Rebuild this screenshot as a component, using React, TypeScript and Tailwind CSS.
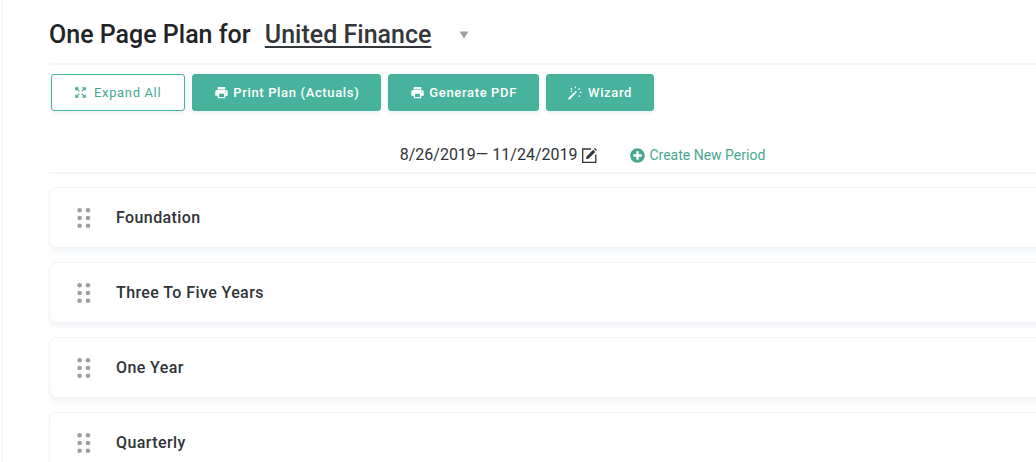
import type { ReactNode } from 'react';
import { FaPlusCircle } from 'react-icons/fa';
import { MdPrint } from 'react-icons/md';
import { clsx } from 'clsx';

const SECTIONS = ['Foundation', 'Three To Five Years', 'One Year', 'Quarterly'];

const ExpandIcon = () => (
  <svg width="11" height="11" viewBox="0 0 11 11" fill="none" stroke="currentColor" strokeWidth="1.2" aria-hidden="true">
    <path d="M.8 3.6V.8h2.8M.8.8l3.4 3.4M7.4.8h2.8v2.8M10.2.8 6.8 4.2M.8 7.4v2.8h2.8M.8 10.2l3.4-3.4M7.4 10.2h2.8V7.4M10.2 10.2 6.8 6.8" />
  </svg>
);

const WandIcon = () => (
  <svg width="14" height="14" viewBox="0 0 14 14" fill="none" stroke="currentColor" strokeLinecap="round" aria-hidden="true">
    <path d="M1.2 12.6 6 7.8" strokeWidth="2" />
    <path d="m7.2 6.6.8-.8" strokeWidth="1.6" />
    <path d="M3.2 2.6l.7.7M7.4.9v.8M11.4 2.6l-.7.7M12.4 6.4h.6M10.9 9.8l.6.6M3.2 5.6l.4-.3" strokeWidth="1.2" />
  </svg>
);

const EditIcon = () => (
  <svg width="17" height="17" viewBox="0 0 17 17" fill="none" stroke="currentColor" aria-hidden="true">
    <path d="M10 2H1.7v13.3h13.1V7.6" strokeWidth="1.3" />
    <path d="M4.9 12.2l.7-2.8 6.6-6.6 2.1 2.1-6.6 6.6z" fill="currentColor" stroke="none" />
    <path d="M13 1.9l.9-.9 2.1 2.1-.9.9z" fill="currentColor" stroke="none" />
  </svg>
);

const DragHandle = () => (
  <svg width="14" height="20" viewBox="0 0 14 20" fill="currentColor" aria-hidden="true">
    {[2.3, 10, 17.7].map((y) => (
      <g key={y}>
        <circle cx="2.6" cy={y} r="2.3" />
        <circle cx="11" cy={y} r="2.3" />
      </g>
    ))}
  </svg>
);

const ToolbarButton = ({
  icon,
  outline = false,
  children,
}: {
  icon: ReactNode;
  outline?: boolean;
  children: ReactNode;
}) => (
  <button
    type="button"
    className={clsx(
      'flex h-[37px] items-center gap-1 rounded-[3px] border border-[#47b39c] text-[13px] tracking-wider shadow-[0_2px_4px_#eaf2f6]',
      outline ? 'bg-white px-[23px] text-[#47a892]' : 'bg-[#47b39c] px-[21px] font-medium text-white'
    )}
  >
    {icon}
    {children}
  </button>
);

const SectionCard = ({ title }: { title: string }) => (
  <li className="flex h-[61px] items-center gap-[25px] rounded-lg border border-[#f1f3f5] bg-white pl-[27px] shadow-[0_4px_5px_#f3f6f9]">
    <button type="button" aria-label={`Move ${title}`} className="cursor-grab text-[#9b9fa2]">
      <DragHandle />
    </button>
    <h2 className="text-base font-medium tracking-wide text-[#303337]">{title}</h2>
  </li>
);

const App = () => {
  return (
    <div className="h-screen overflow-hidden bg-white pl-0.5 font-['Roboto',sans-serif]">
      {/* The plan runs on past the right edge of the window */}
      <main className="-mr-20 min-h-full border-l border-[#f0f1f3] pl-[46px]">
        <header className="flex h-[65px] items-center border-b-2 border-[#f5f6f7] pt-1.5">
          <h1 className="text-[25px] font-medium text-[#212327]">
            One Page Plan for{' '}
            <a href="#plan" className="ml-2 text-[#33363a] underline decoration-2 underline-offset-3">
              United Finance
            </a>
          </h1>
          <button type="button" aria-label="Switch plan" className="ml-[28px] text-[#9aa3a6]">
            <svg width="10" height="8" viewBox="0 0 10 8" fill="currentColor" aria-hidden="true">
              <path d="M.5.5h9L5 7.5z" />
            </svg>
          </button>
        </header>

        <div className="flex gap-[7px] px-0.5 pt-[9px]">
          <ToolbarButton outline icon={<span className="mr-1"><ExpandIcon /></span>}>
            Expand All
          </ToolbarButton>
          <ToolbarButton icon={<MdPrint size={15} />}>Print Plan (Actuals)</ToolbarButton>
          <ToolbarButton icon={<MdPrint size={15} />}>Generate PDF</ToolbarButton>
          <ToolbarButton icon={<span className="mr-0.5"><WandIcon /></span>}>Wizard</ToolbarButton>
        </div>

        <div className="mt-[25px] flex h-[38px] items-center justify-center gap-8 border-b-2 border-[#f5f6f7] pt-0.5">
          <div className="flex items-center gap-1 text-base text-[#303337]">
            <span>8/26/2019— 11/24/2019</span>
            <button type="button" aria-label="Edit period">
              <EditIcon />
            </button>
          </div>
          <button type="button" className="flex items-center gap-1 text-sm text-[#47a892]">
            <FaPlusCircle size={15} />
            Create New Period
          </button>
        </div>

        <ul className="mt-[13px] flex flex-col gap-3.5">
          {SECTIONS.map((title) => (
            <SectionCard key={title} title={title} />
          ))}
        </ul>
      </main>
    </div>
  );
};

export default App;
